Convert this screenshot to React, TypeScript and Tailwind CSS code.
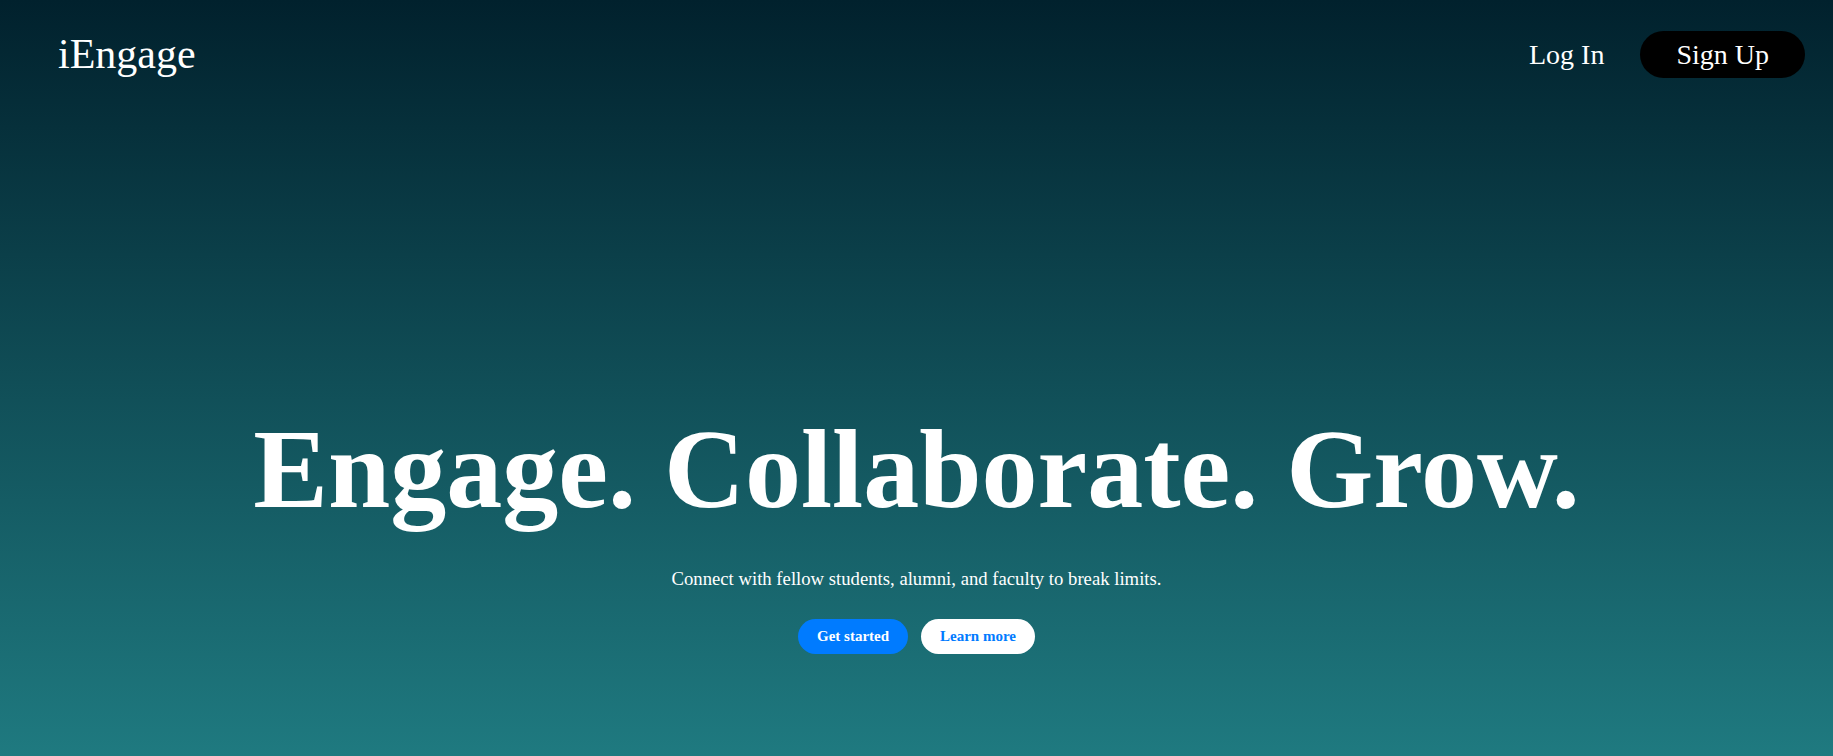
import React from "react";

const serif = { fontFamily: '"Liberation Serif", "Times New Roman", serif' };

export default function App() {
  return (
    <div
      className="min-h-screen w-full flex flex-col text-white bg-[linear-gradient(to_bottom,#01212d,#1f7a80)]"
      style={serif}
    >
      {/* Header */}
      <header className="h-[109px] flex items-center justify-between pl-[58px] pr-[28px]">
        <a href="#" className="text-[42px] leading-normal">
          iEngage
        </a>
        <nav className="flex items-center gap-[36px]">
          <button className="text-[28px] leading-normal">Log In</button>
          <button className="h-[47px] flex items-center text-[28px] leading-none bg-black rounded-full px-[36px]">
            Sign Up
          </button>
        </nav>
      </header>

      {/* Hero */}
      <main className="flex flex-col items-center pt-[276px]">
        <h1 className="text-[112px] font-bold leading-normal text-center">
          Engage. Collaborate. Grow.
        </h1>
        <p className="mt-[12px] text-[18.7px] leading-normal">
          Connect with fellow students, alumni, and faculty to break limits.
        </p>
        <div className="mt-[26px] flex gap-[13px]">
          <button className="h-[35px] flex items-center bg-[#007bff] text-white font-bold text-[15px] leading-none rounded-full px-[19px]">
            Get started
          </button>
          <button className="h-[35px] flex items-center bg-white text-[#007bff] font-bold text-[15px] leading-none rounded-full px-[19px]">
            Learn more
          </button>
        </div>
      </main>
    </div>
  );
}
